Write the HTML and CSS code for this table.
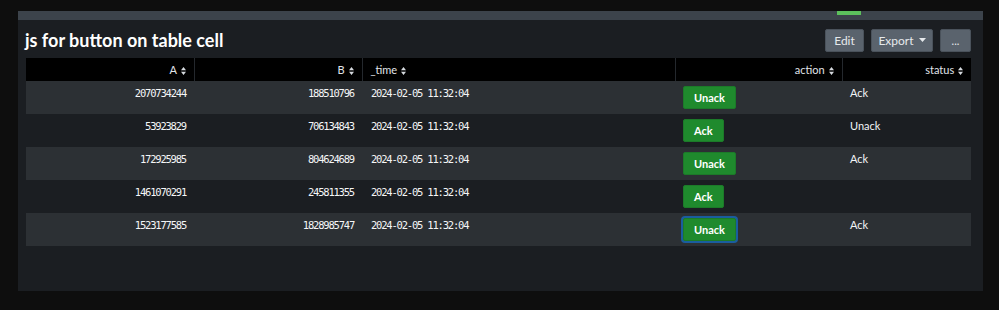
FILE: index.html
```html
<!DOCTYPE html>
<html>
<head>
<meta charset="utf-8">
<link rel="stylesheet" href="styles.css">
</head>
<body>
<div class="page">
  <div class="panel">
    <div class="topbar"><span class="marker"></span></div>
    <div class="body">
      <div class="titlerow">
        <h2 class="title">js for button on table cell</h2>
        <div class="actions">
          <button class="tbtn edit">Edit</button>
          <button class="tbtn export">Export <svg class="caret" width="7" height="4" viewBox="0 0 7 4"><path d="M0 0h7L3.5 4z" fill="#e6e9ec"/></svg></button>
          <button class="tbtn more">...</button>
        </div>
      </div>
      <table class="grid">
        <colgroup>
          <col class="c1"><col class="c2"><col class="c3"><col class="c4"><col class="c5">
        </colgroup>
        <thead>
          <tr>
            <th class="r">A <svg class="sort" width="5" height="8" viewBox="0 0 5 8"><path d="M0 3.3h5L2.5 0zM0 4.7h5L2.5 8z" fill="#d6dadf"/></svg></th>
            <th class="r">B <svg class="sort" width="5" height="8" viewBox="0 0 5 8"><path d="M0 3.3h5L2.5 0zM0 4.7h5L2.5 8z" fill="#d6dadf"/></svg></th>
            <th class="l">_time <svg class="sort" width="5" height="8" viewBox="0 0 5 8"><path d="M0 3.3h5L2.5 0zM0 4.7h5L2.5 8z" fill="#d6dadf"/></svg></th>
            <th class="r">action <svg class="sort" width="5" height="8" viewBox="0 0 5 8"><path d="M0 3.3h5L2.5 0zM0 4.7h5L2.5 8z" fill="#d6dadf"/></svg></th>
            <th class="r">status <svg class="sort" width="5" height="8" viewBox="0 0 5 8"><path d="M0 3.3h5L2.5 0zM0 4.7h5L2.5 8z" fill="#d6dadf"/></svg></th>
          </tr>
        </thead>
        <tbody>
          <tr class="odd">
            <td class="num">2070734244</td><td class="num">188510796</td><td class="time">2024-02-05 11:32:04</td>
            <td class="act"><button class="gbtn">Unack</button></td><td class="st">Ack</td>
          </tr>
          <tr>
            <td class="num">53923829</td><td class="num">706134843</td><td class="time">2024-02-05 11:32:04</td>
            <td class="act"><button class="gbtn">Ack</button></td><td class="st">Unack</td>
          </tr>
          <tr class="odd">
            <td class="num">172925985</td><td class="num">804624689</td><td class="time">2024-02-05 11:32:04</td>
            <td class="act"><button class="gbtn">Unack</button></td><td class="st">Ack</td>
          </tr>
          <tr>
            <td class="num">1461070291</td><td class="num">245811355</td><td class="time">2024-02-05 11:32:04</td>
            <td class="act"><button class="gbtn">Ack</button></td><td class="st"></td>
          </tr>
          <tr class="odd">
            <td class="num">1523177585</td><td class="num">1828985747</td><td class="time">2024-02-05 11:32:04</td>
            <td class="act"><button class="gbtn focus">Unack</button></td><td class="st">Ack</td>
          </tr>
        </tbody>
      </table>
    </div>
  </div>
</div>
</body>
</html>
```

FILE: styles.css
```css
html, body {
  margin: 0;
  padding: 0;
  background: #0e0e0e;
}
.page {
  width: 999px;
  height: 310px;
  padding: 11px 16px 0 18px;
  box-sizing: border-box;
  font-family: Lato, "Open Sans", sans-serif;
}
.panel {
  width: 965px;
  height: 280px;
  background: #1b1e22;
  display: flex;
  flex-direction: column;
}
.topbar {
  height: 9px;
  background: #3c434b;
  position: relative;
  flex: none;
}
.marker {
  position: absolute;
  left: 819px;
  top: 0;
  width: 24px;
  height: 4px;
  background: #5cc05c;
}
.body {
  padding: 0 12px 0 8px;
}
.titlerow {
  display: flex;
  justify-content: space-between;
  align-items: center;
  padding: 8px 0 6px 0;
}
.title {
  margin: 0 0 0 -1px;
  font-size: 18px;
  font-weight: 700;
  line-height: 23px;
  padding-top: 1px;
  color: #ffffff;
  letter-spacing: 0;
}
.actions {
  display: flex;
  gap: 7px;
}
.tbtn {
  height: 23px;
  box-sizing: border-box;
  border: 1px solid #4a525b;
  border-radius: 2px;
  background: #5a636d;
  color: #e6e9ec;
  font-family: Lato, "Open Sans", sans-serif;
  font-size: 12px;
  padding: 0;
  display: flex;
  align-items: center;
  justify-content: center;
  gap: 5px;
}
.edit { width: 39px; }
.export { width: 62px; }
.more { width: 31px; font-size: 11px; }
.caret { display: block; }
.grid {
  width: 945px;
  border-collapse: collapse;
  table-layout: fixed;
}
.c1 { width: 168px; }
.c2 { width: 168px; }
.c3 { width: 313px; }
.c4 { width: 167px; }
.c5 { width: 129px; }
th {
  height: 23px;
  padding: 0 8px;
  background: #000;
  color: #e1e5ea;
  font-size: 11px;
  font-weight: 400;
  border-left: 1px solid #24282d;
  box-sizing: border-box;
  white-space: nowrap;
}
th:first-child { border-left: none; }
th.r { text-align: right; }
th.l { text-align: left; }
.sort {
  display: inline-block;
  vertical-align: -1px;
  margin-left: 1px;
}
td {
  height: 33px;
  box-sizing: border-box;
  padding: 7px 8px 0 8px;
  vertical-align: top;
  color: #f2f4f6;
  white-space: nowrap;
}
tr.odd td { background: #2c3034; }
td.num, td.time {
  font-family: "DejaVu Sans Mono", "Liberation Mono", monospace;
  font-size: 10.5px;
  font-weight: 400;
  letter-spacing: -1.2px;
  line-height: 12px;
  padding-top: 6px;
  color: #f5f6f7;
}
td.num { text-align: right; }
td.time { text-align: left; padding-left: 9px; }
td.act { padding-top: 5px; }
td.st {
  font-size: 11px;
  line-height: 12px;
  padding-top: 6px;
  text-align: left;
}
.gbtn {
  height: 23px;
  padding: 0 10px;
  border: 1px solid #1c7a29;
  border-radius: 2px;
  background: #1f8a2d;
  color: #ffffff;
  font-family: Lato, "Open Sans", sans-serif;
  font-size: 11px;
  font-weight: 700;
  display: block;
}
.gbtn.focus {
  box-shadow: 0 0 0 2px #1a5d9e;
}
```
